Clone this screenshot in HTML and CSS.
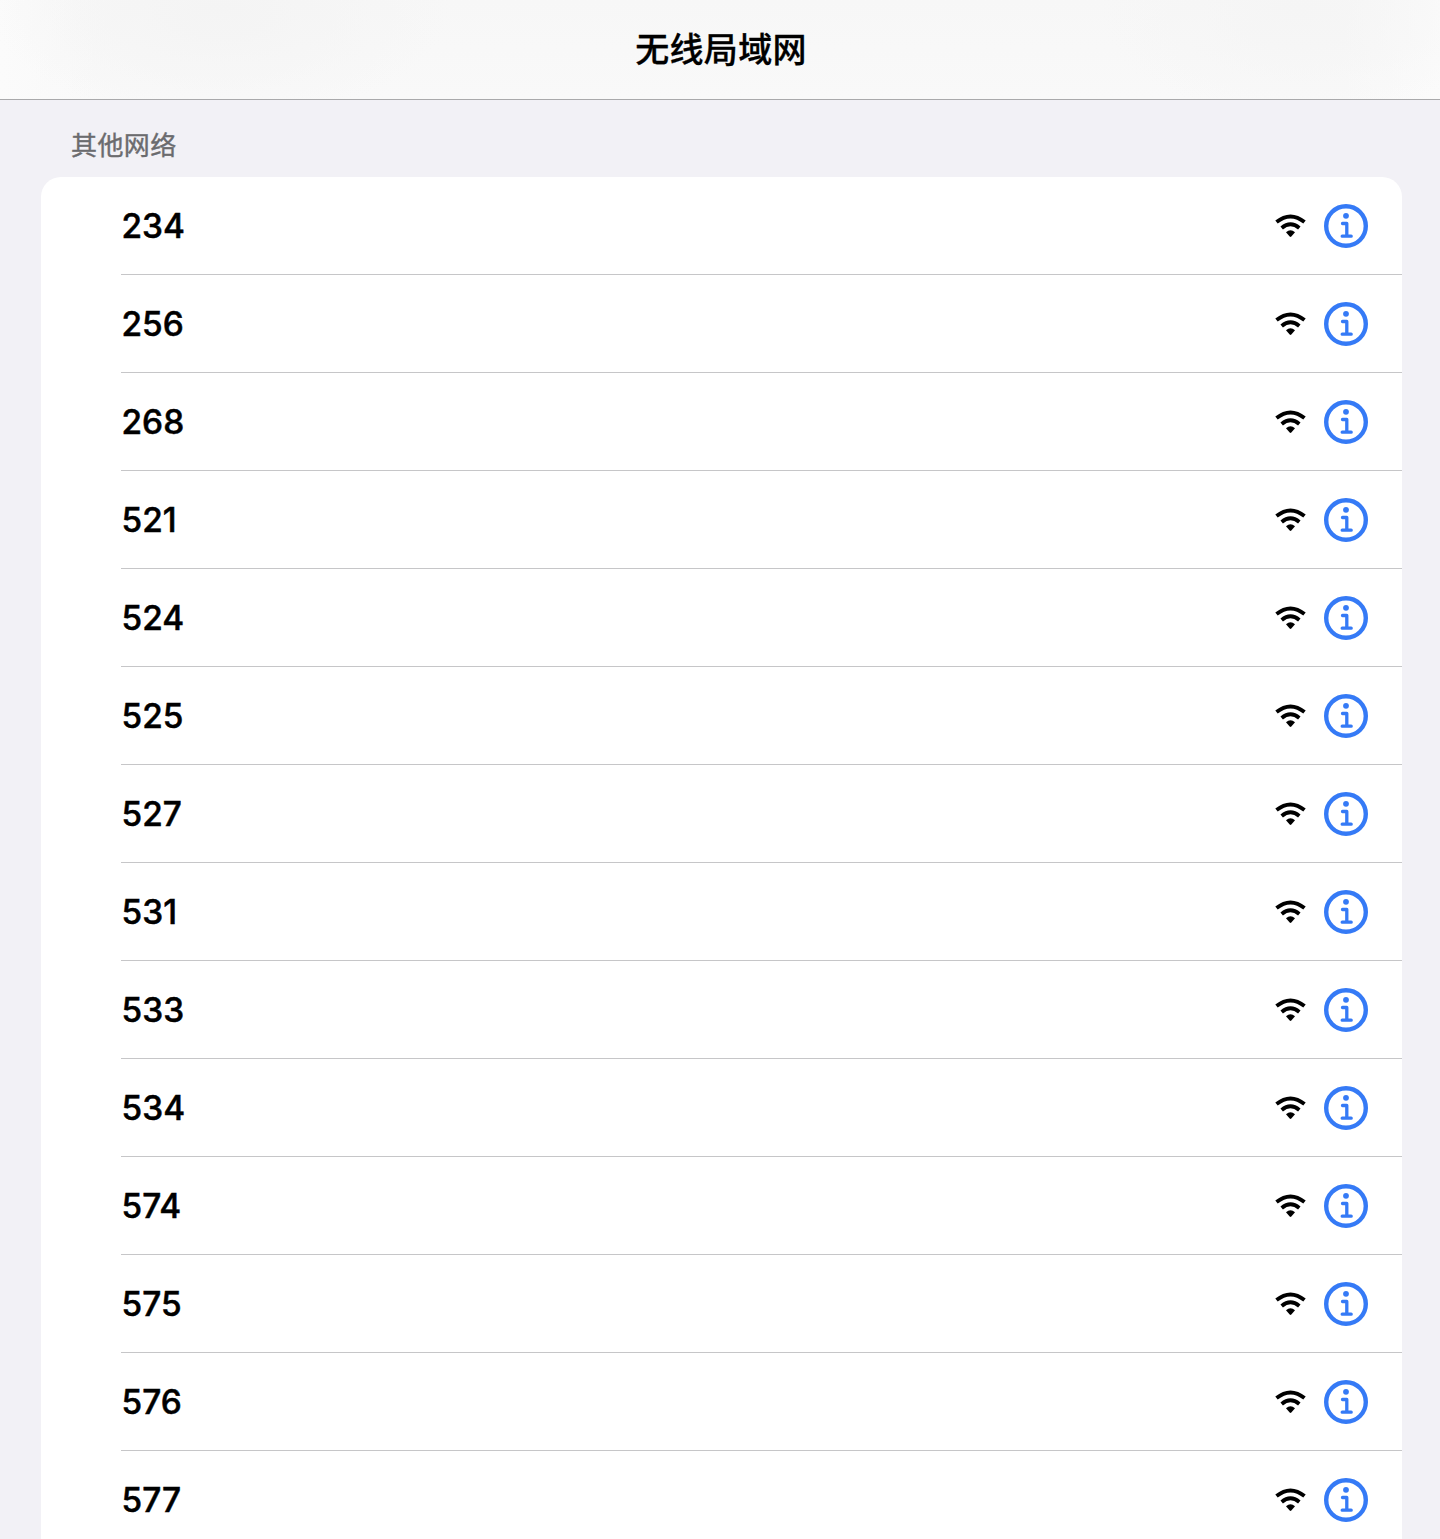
FILE: index.html
```html
<!DOCTYPE html>
<html lang="zh-CN">
<head>
<meta charset="utf-8">
<title>无线局域网</title>
<link rel="stylesheet" href="styles.css">
</head>
<body>
<svg class="sprite" aria-hidden="true">
  <symbol id="wifi" viewBox="0 0 32 24">
    <path d="M1.500 8Q15.500 -3.200 29.500 8" fill="none" stroke="currentColor" stroke-width="3.900"/>
    <path d="M6.700 13.900Q15.500 6.700 24.300 13.900" fill="none" stroke="currentColor" stroke-width="3.900"/>
    <path d="M11 18.300Q15.500 14.300 20 18.300L16.300 22.500Q15.500 23.300 14.700 22.500Z" fill="currentColor"/>
  </symbol>
  <symbol id="info" viewBox="0 0 44 44">
    <circle cx="22" cy="22" r="19.800" fill="none" stroke="currentColor" stroke-width="4.400"/>
    <circle cx="22" cy="11.800" r="2.900" fill="currentColor"/>
    <path d="M18.500 19.500H22.800V31.900M18.200 32.200H27.200" fill="none" stroke="currentColor" stroke-width="3.300" stroke-linecap="round" stroke-linejoin="round"/>
  </symbol>
</svg>
<header class="navbar"><h1 class="title">无线局域网</h1></header>
<main class="content">
  <h2 class="section-title">其他网络</h2>
  <ul class="networks" id="networks"></ul>
</main>
<script src="networks.js"></script>
</body>
</html>
```
FILE: styles.css
```css
* { box-sizing: border-box; }
body {
  margin: 0;
  height: 1539px;
  overflow: hidden;
  background: #f2f1f6;
  font-family: Inter, "Noto Sans CJK SC", sans-serif;
  color: #000;
}
.sprite { position: absolute; width: 0; height: 0; }
.navbar {
  height: 100px;
  display: flex;
  justify-content: center;
  border-bottom: 1px solid #a9a9ab;
  background:
    radial-gradient(ellipse 230px 110px at 220px 10px, #f4f4f4, rgba(244, 244, 244, 0)),
    radial-gradient(ellipse 200px 110px at 1300px 10px, #f5f5f5, rgba(245, 245, 245, 0)),
    linear-gradient(90deg, #fbfbfb 0, rgba(249, 249, 249, 0) 100px, rgba(249, 249, 249, 0) 1340px, #fbfbfb 1440px),
    linear-gradient(#f7f7f7, #f9f9f9);
}
.title {
  margin: 0;
  padding-left: 2px;
  font-family: "Noto Sans CJK SC", sans-serif;
  font-size: 34px;
  line-height: 95px;
  font-weight: 500;
  letter-spacing: 0.3px;
  -webkit-text-stroke: 0.3px #000;
}
.content { padding: 0 38px 0 41px; }
.section-title {
  margin: 0;
  padding: 18px 30px 0;
  height: 77px;
  font-family: "Noto Sans CJK SC", sans-serif;
  font-size: 26px;
  line-height: 52px;
  font-weight: 400;
  letter-spacing: 0.4px;
  color: #6b6b6e;
  -webkit-text-stroke: 0.4px #6b6b6e;
}
.networks {
  margin: 0;
  padding: 0 0 0 80px;
  list-style: none;
  border-radius: 20px 20px 0 0;
  background: #fff;
}
.network {
  height: 98px;
  padding: 0 34px 0 0.4px;
  display: flex;
  align-items: center;
  border-bottom: 1px solid #c6c6c8;
}
.name {
  flex: 1;
  font-size: 33.4px;
  font-weight: 500;
  letter-spacing: 0.1px;
  line-height: 98px;
  padding-top: 1px;
  -webkit-text-stroke: 0.5px #000;
}
.wifi { width: 32px; height: 24px; margin-right: 17px; }
.info { width: 44px; height: 44px; color: #357af6; }
```
FILE: networks.js
```js
const names = ["234", "256", "268", "521", "524", "525", "527", "531", "533", "534", "574", "575", "576", "577"];
document.getElementById("networks").innerHTML = names.map(name => `
  <li class="network">
    <span class="name">${name}</span>
    <svg class="wifi"><use href="#wifi"/></svg>
    <svg class="info"><use href="#info"/></svg>
  </li>`).join("");
```
